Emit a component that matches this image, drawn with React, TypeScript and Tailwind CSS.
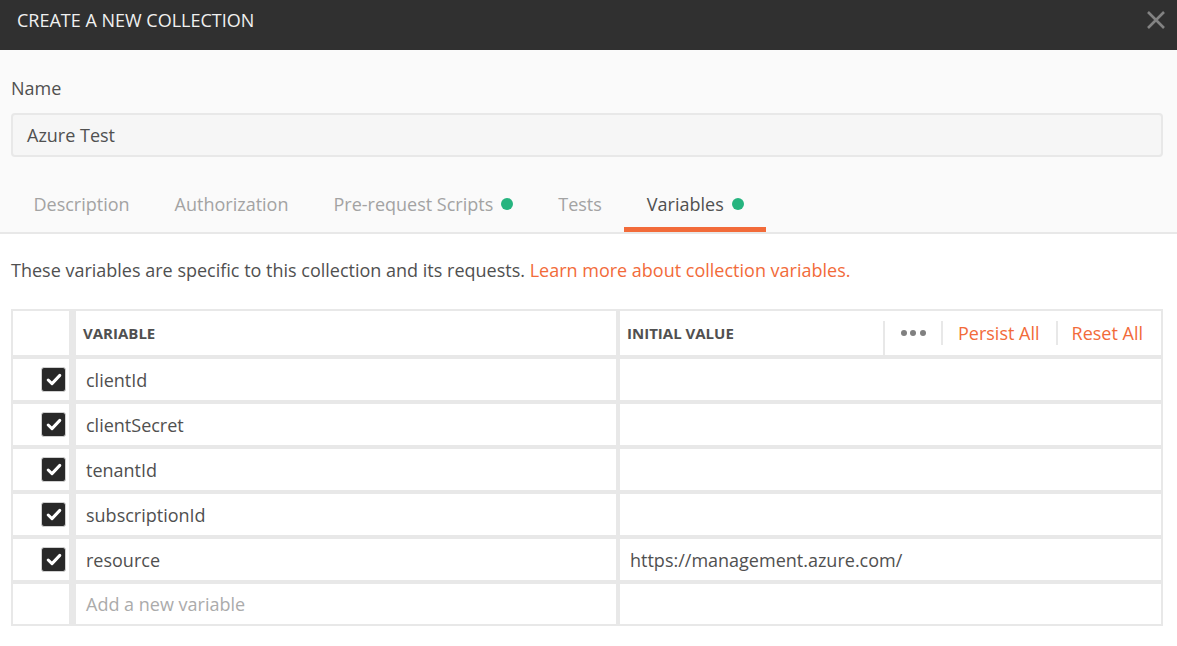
import React from "react";

const rows = [
  { name: "clientId", value: "" },
  { name: "clientSecret", value: "" },
  { name: "tenantId", value: "" },
  { name: "subscriptionId", value: "" },
  { name: "resource", value: "https://management.azure.com/" },
];

function Check() {
  return (
    <div className="w-[25px] h-[25px] rounded-[3px] bg-[#282828] border border-[#d0d0d0] flex items-center justify-center">
      <svg width="16" height="13" viewBox="0 0 16 13">
        <path d="M2.2 7 L6 10.6 L13.8 2.4" fill="none" stroke="#fff" strokeWidth="3" strokeLinecap="round" strokeLinejoin="round" />
      </svg>
    </div>
  );
}

function Tab({ label, active, dot }: { label: string; active?: boolean; dot?: boolean }) {
  return (
    <div className={"relative flex items-center h-full px-[22.5px] " + (active ? "text-[#505050]" : "text-[#a3a3a3]")}>
      <span>{label}</span>
      {dot && <span className="ml-[8px] w-[12px] h-[12px] rounded-full bg-[#26b47f]" />}
      {active && <div className="absolute left-0 right-0 bottom-0 h-[5px] bg-[#f26b3a]" />}
    </div>
  );
}

export default function App() {
  return (
    <div className="w-[1177px] h-[646px] bg-white text-[18px] text-[#505050] overflow-hidden" style={{ fontFamily: '"Open Sans", sans-serif' }}>
      <div className="h-[50px] bg-[#303030] flex items-start justify-between pl-[17px] pr-[11px] pt-[6px]">
        <div className="text-[18px] text-[#f0f0f0] leading-[28px]">CREATE A NEW COLLECTION</div>
        <svg width="20" height="20" viewBox="0 0 20 20" className="mt-[4px]">
          <path d="M2 2 L18 18 M18 2 L2 18" stroke="#828282" strokeWidth="2.6" />
        </svg>
      </div>
      <div className="bg-[#fafafa] pl-[11px] pr-[14px] pt-[26px]">
        <div className="leading-[24px]">Name</div>
        <div className="mt-[13px] h-[44px] border-2 border-[#e8e8e8] rounded-[4px] bg-[#f6f6f6] flex items-center pl-[14px] pt-[1px]">Azure Test</div>
      </div>
      <div className="bg-[#fafafa] h-[77px] pt-[19px] flex border-b-2 border-[#e8e8e8] px-[11px]">
        <Tab label="Description" />
        <Tab label="Authorization" />
        <Tab label="Pre-request Scripts" dot />
        <Tab label="Tests" />
        <Tab label="Variables" active dot />
      </div>
      <div className="pl-[11px] pr-[14px]">
        <div className="pt-[24px] leading-[24px]">
          These variables are specific to this collection and its requests.{" "}
          <span className="text-[#f26b3a]">Learn more about collection variables.</span>
        </div>
        <div className="mt-[27px] border-2 border-[#e8e8e8] bg-[#e8e8e8] flex flex-col gap-[4px]">
          <div className="flex h-[44px]">
            <div className="w-[56px] bg-white" />
            <div className="ml-[7px] w-[540px] bg-white flex items-center pl-[7px] text-[15px] font-bold text-[#505050]">VARIABLE</div>
            <div className="ml-[4px] flex-1 bg-white flex items-center pl-[7px] text-[15px] font-bold text-[#505050]">
              <span>INITIAL VALUE</span>
              <div className="ml-auto flex items-center h-full">
                <div className="w-[2px] h-[34px] bg-[#e8e8e8] self-end" />
                <div className="pl-[16px] pr-[15px] flex gap-[3.5px]">
                  <span className="w-[6px] h-[6px] rounded-full bg-[#808080]" />
                  <span className="w-[6px] h-[6px] rounded-full bg-[#808080]" />
                  <span className="w-[6px] h-[6px] rounded-full bg-[#808080]" />
                </div>
                <div className="w-[2px] h-[24px] bg-[#e8e8e8]" />
                <span className="pl-[15px] pr-[16px] text-[18px] font-normal text-[#f26b3a]">Persist All</span>
                <div className="w-[2px] h-[24px] bg-[#e8e8e8]" />
                <span className="pl-[14px] pr-[18px] text-[18px] font-normal text-[#f26b3a]">Reset All</span>
              </div>
            </div>
          </div>
          {rows.map((r) => (
            <div key={r.name} className="flex h-[41px]">
              <div className="w-[56px] bg-white flex items-center justify-end pr-[3px]">
                <Check />
              </div>
              <div className="ml-[7px] w-[540px] bg-white flex items-center pl-[10px] pt-[1px]">{r.name}</div>
              <div className="ml-[4px] flex-1 bg-white flex items-center pl-[10px] pt-[1px]">{r.value}</div>
            </div>
          ))}
          <div className="flex h-[40px]">
            <div className="w-[56px] bg-white" />
            <div className="ml-[7px] w-[540px] bg-white flex items-center pl-[10px] pt-[1px] text-[#ababab]">Add a new variable</div>
            <div className="ml-[4px] flex-1 bg-white" />
          </div>
        </div>
      </div>
    </div>
  );
}
